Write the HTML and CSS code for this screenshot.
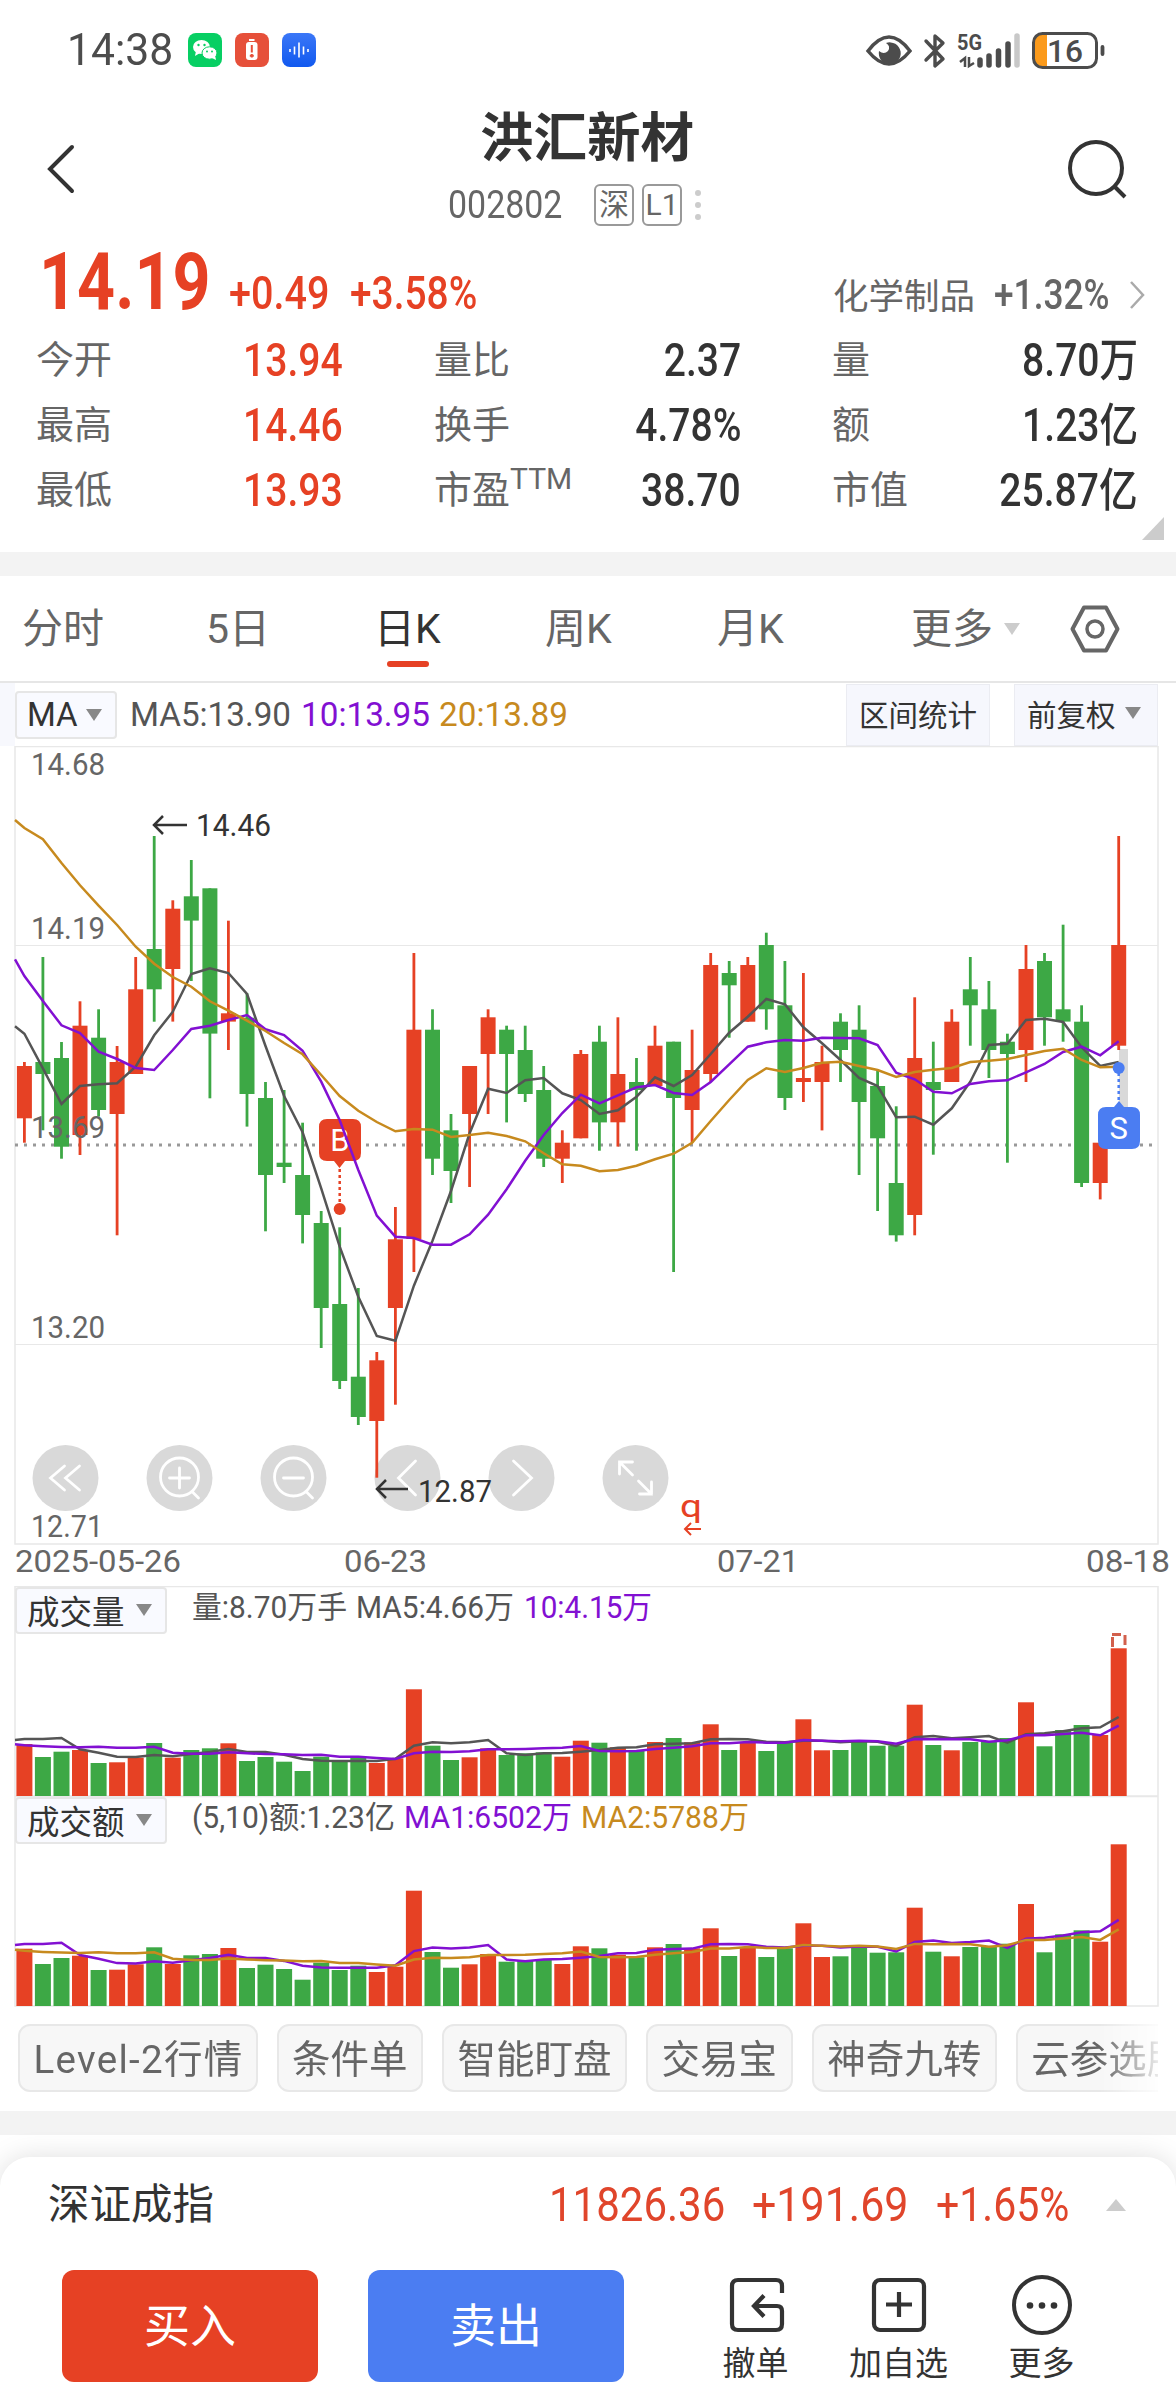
FILE: index.html
```html
<!DOCTYPE html>
<html lang="zh-CN">
<head>
  <meta charset="UTF-8" />
  <meta name="viewport" content="width=device-width, initial-scale=1.0"/>
  <title>洪汇新材 002802</title>
  <link rel="stylesheet" href="styles.css">
</head>
<body>
  <!-- Status bar -->
  <div class="status-bar">
    <span class="clock">14:38</span>
    <div class="status-apps">
      <svg class="app-icon" viewBox="0 0 34 34"><rect width="34" height="34" rx="8" fill="#07cf63"/><ellipse cx="13.500" cy="14" rx="8.500" ry="7" fill="#fff"/><path d="M8 18l-1 5 5-3z" fill="#fff"/><ellipse cx="21.500" cy="20" rx="7.500" ry="6.200" fill="#fff" stroke="#07cf63"/><path d="M24 25l4 2-1-5z" fill="#fff"/><g fill="#07cf63"><circle cx="10.500" cy="12" r="1.200"/><circle cx="16.500" cy="12" r="1.200"/><circle cx="19" cy="18.500" r="1"/><circle cx="24" cy="18.500" r="1"/></g></svg>
      <svg class="app-icon" viewBox="0 0 34 34"><rect width="34" height="34" rx="8" fill="#e6503a"/><rect x="11" y="9" width="11.500" height="18" rx="3" fill="#fff"/><rect x="14" y="6" width="5.500" height="2" fill="#fff"/><path d="M16.800 12v7.500M16.800 21v3.500M14.800 22.700h4" stroke="#e6503a" stroke-width="2"/></svg>
      <svg class="app-icon" viewBox="0 0 34 34"><defs><linearGradient id="voice" x2="0" y2="1"><stop stop-color="#3b77f7"/><stop offset="1" stop-color="#1159ef"/></linearGradient></defs><rect width="34" height="34" rx="8" fill="url(#voice)"/><path d="M8 16v3M12.500 13.500v8M17 9.500v15M21.500 13.500v8M26 16v3" stroke="#fff" stroke-width="1.600"/></svg>
    </div>
    <svg class="status-icons" viewBox="860 26 250 46">
      <path d="M868 50Q889 22 910 50Q889 76 868 50z" fill="none" stroke="#4c4c4c" stroke-width="3.500"/>
      <path d="M886 42a11 11 0 1 1-7 8q5 4 9 0 3-5-2-8z" fill="#4c4c4c"/>
      <path d="M926 40l17 18-8 7V35l8 7-17 17" fill="none" stroke="#4c4c4c" stroke-width="3.400" stroke-linecap="round" stroke-linejoin="round"/>
      <text x="957" y="49" class="net" textLength="25" lengthAdjust="spacingAndGlyphs">5G</text>
      <path d="M965 66V57l-5 4M969 56v9l5-3" fill="none" stroke="#4c4c4c" stroke-width="2.500"/>
      <path d="M980 64v-5M989 64v-9M998.500 64V50M1008 64V43" stroke="#4c4c4c" stroke-width="5.500" stroke-linecap="round"/>
      <path d="M1017 64V35" stroke="#c8c8c8" stroke-width="5.500" stroke-linecap="round"/>
      <path d="M1047 33h-6q-7 0-7 7v19q0 7 7 7h6z" fill="#fb9a1b"/>
      <rect x="1033.500" y="32.500" width="63" height="34" rx="9" fill="none" stroke="#4c4c4c" stroke-width="3"/>
      <path d="M1102.500 46v7" stroke="#4c4c4c" stroke-width="3.800" stroke-linecap="round"/>
      <text x="1047" y="61" class="batt" textLength="36" lengthAdjust="spacingAndGlyphs">16</text>
    </svg>
  </div>

  <!-- Title -->
  <header class="title-bar">
    <svg class="back" viewBox="0 0 30 50"><path d="M26 3L4 25l22 22" fill="none" stroke="#333" stroke-width="4" stroke-linecap="round"/></svg>
    <div class="title-main">
      <h1>洪汇新材</h1>
      <div class="title-sub">
        <span class="code">002802</span>
        <span class="badge">深</span>
        <span class="badge">L1</span>
        <span class="dots"><i></i><i></i><i></i></span>
      </div>
    </div>
    <svg class="search" viewBox="0 0 60 60"><circle cx="28" cy="28" r="26" fill="none" stroke="#333" stroke-width="4"/><path d="M46 46l11 11" stroke="#333" stroke-width="4"/></svg>
  </header>

  <!-- Quote -->
  <section class="quote">
    <div class="price-row">
      <span class="price">14.19</span>
      <span class="change">+0.49</span>
      <span class="change pct">+3.58%</span>
      <span class="industry">化学制品</span>
      <span class="industry-pct">+1.32%</span>
      <svg class="go" viewBox="0 0 16 28"><path d="M2 1l12 13L2 27" fill="none" stroke="#aaa" stroke-width="2.500"/></svg>
    </div>
    <div class="stats">
      <div class="stat"><span>今开</span><b class="up">13.94</b></div>
      <div class="stat"><span>量比</span><b>2.37</b></div>
      <div class="stat"><span>量</span><b>8.70<em>万</em></b></div>
      <div class="stat"><span>最高</span><b class="up">14.46</b></div>
      <div class="stat"><span>换手</span><b>4.78%</b></div>
      <div class="stat"><span>额</span><b>1.23<em>亿</em></b></div>
      <div class="stat"><span>最低</span><b class="up">13.93</b></div>
      <div class="stat"><span>市盈<sup>TTM</sup></span><b>38.70</b></div>
      <div class="stat"><span>市值</span><b>25.87<em>亿</em></b></div>
    </div>
    <i class="corner"></i>
  </section>

  <!-- Period tabs -->
  <nav class="tabs">
    <a>分时</a>
    <a>5日</a>
    <a class="active">日K</a>
    <a>周K</a>
    <a>月K</a>
    <a class="more">更多<i class="tri light"></i></a>
    <svg class="gear" viewBox="0 0 52 52"><path d="M15 4.500h22L48.500 26 37 47.500H15L3.500 26z" fill="none" stroke="#666" stroke-width="4" stroke-linejoin="round"/><circle cx="26" cy="26" r="8" fill="none" stroke="#666" stroke-width="3.500"/></svg>
  </nav>

  <!-- MA bar -->
  <div class="ma-bar">
    <div class="select">MA<i class="tri"></i></div>
    <svg class="ma-text" viewBox="125 0 450 63">
      <text x="130" y="43" textLength="161" lengthAdjust="spacingAndGlyphs" fill="#555">MA5:13.90</text>
      <text x="301" y="43" textLength="129" lengthAdjust="spacingAndGlyphs" fill="#8210d2">10:13.95</text>
      <text x="439" y="43" textLength="129" lengthAdjust="spacingAndGlyphs" fill="#c78a1e">20:13.89</text>
    </svg>
    <div class="tool">区间统计</div>
    <div class="tool">前复权<i class="tri"></i></div>
  </div>

  <!-- Charts are filled in by chart.js -->
  <svg id="kline" class="chart" width="1176" height="840" viewBox="0 746 1176 840"></svg>

  <div class="panel">
    <div class="select wide">成交量<i class="tri"></i></div>
    <svg id="volume" class="chart" width="1176" height="210" viewBox="0 1586 1176 210"></svg>
  </div>
  <div class="panel">
    <div class="select wide">成交额<i class="tri"></i></div>
    <svg id="amount" class="chart" width="1176" height="212" viewBox="0 1796 1176 212"></svg>
  </div>

  <!-- Shortcuts -->
  <div class="chips">
    <span>Level-2行情</span>
    <span>条件单</span>
    <span>智能盯盘</span>
    <span>交易宝</span>
    <span>神奇九转</span>
    <span>云参选股</span>
  </div>
  <div class="gap"></div>

  <!-- Bottom sheet -->
  <footer class="sheet">
    <div class="index-row">
      <span class="index-name">深证成指</span>
      <span class="idx v1">11826.36</span>
      <span class="idx v2">+191.69</span>
      <span class="idx v3">+1.65%</span>
      <i class="tri-up"></i>
    </div>
    <div class="actions">
      <button class="buy">买入</button>
      <button class="sell">卖出</button>
      <div class="action">
        <svg viewBox="0 0 60 60"><path d="M56 18V11q0-6-6-6H12q-6 0-6 6v38q0 6 6 6h38q6 0 6-6V36q0-5-5-5H29M38 20.500L28 31l10 10.500" fill="none" stroke="#333" stroke-width="4.200"/></svg>
        <span>撤单</span>
      </div>
      <div class="action">
        <svg viewBox="0 0 60 60"><rect x="5" y="5" width="50" height="50" rx="6" fill="none" stroke="#333" stroke-width="4.200"/><path d="M30 17v25M17 29.500h26" stroke="#333" stroke-width="4.200"/></svg>
        <span>加自选</span>
      </div>
      <div class="action">
        <svg viewBox="0 0 60 60"><circle cx="30" cy="30" r="28" fill="none" stroke="#333" stroke-width="4"/><g fill="#333"><circle cx="18" cy="30.500" r="3.300"/><circle cx="30" cy="30.500" r="3.300"/><circle cx="42" cy="30.500" r="3.300"/></g></svg>
        <span>更多</span>
      </div>
    </div>
  </footer>
  <script src="chart.js"></script>
</body>
</html>
```
FILE: styles.css
```css
body {
  margin: 0;
  width: 1176px;
  height: 2400px;
  overflow: hidden;
  background: #fff;
  color: #333;
  font-family: Roboto, 'Noto Sans CJK SC', sans-serif;
  display: flex;
  flex-direction: column;
}

svg {
  display: block;
  flex: none;
}

h1 {
  margin: 0;
}

/* Status bar */
.status-bar {
  height: 100px;
  flex: none;
  display: flex;
  align-items: center;
  box-sizing: border-box;
  padding-left: 67px;
}

.clock {
  width: 121px;
  font-size: 44px;
  line-height: 100px;
  color: #4c4c4c;
  transform: scaleX(0.97);
  transform-origin: left;
}

.status-apps {
  display: flex;
  gap: 13px;
}

.app-icon {
  width: 34px;
  height: 34px;
}

.status-icons {
  width: 250px;
  height: 46px;
  margin-left: auto;
  margin-right: 66px;
}

.status-icons text {
  fill: #4c4c4c;
}

.net {
  font-size: 22px;
  font-weight: 700;
}

.batt {
  font-size: 31px;
  font-weight: 500;
}

/* Title */
.title-bar {
  height: 140px;
  flex: none;
  display: flex;
  justify-content: space-between;
  box-sizing: border-box;
  padding: 0 48px 0 46px;
}

.back {
  width: 30px;
  height: 50px;
  margin-top: 44px;
  margin-right: 30px;
}

.search {
  width: 60px;
  height: 60px;
  margin-top: 40px;
}

.title-main {
  display: flex;
  flex-direction: column;
  align-items: center;
}

.title-main h1 {
  font-size: 53.5px;
  line-height: 78px;
  font-weight: 700;
}

.title-sub {
  display: flex;
  align-items: center;
  height: 42px;
  margin-top: 6px;
  margin-left: -25px;
  gap: 8px;
}

.code {
  width: 138px;
  font-size: 39px;
  color: #666;
  transform: scaleX(0.87);
  transform-origin: left;
}

.badge {
  width: 40px;
  height: 42px;
  box-sizing: border-box;
  border: 2px solid #999;
  border-radius: 6px;
  font-size: 30px;
  line-height: 38px;
  text-align: center;
  color: #666;
}

.dots {
  display: flex;
  flex-direction: column;
  gap: 6px;
  margin-left: 5px;
}

.dots i {
  width: 6px;
  height: 6px;
  border-radius: 50%;
  background: #ccc;
}

/* Quote */
.quote {
  height: 312px;
  flex: none;
  position: relative;
}

.price-row {
  display: flex;
  align-items: baseline;
  height: 88px;
  padding-left: 39px;
  white-space: nowrap;
  line-height: 84px;
  color: #e64124;
}

.price-row span {
  transform-origin: left;
}

.price {
  width: 190px;
  font-size: 79px;
  font-weight: 700;
  transform: scaleX(0.84);
}

.change {
  width: 121px;
  font-size: 46px;
  font-weight: 500;
  transform: scaleX(0.86);
}

.pct {
  width: 483px;
  transform: scaleX(0.845);
}

.industry {
  width: 161px;
  font-size: 35.5px;
  color: #666;
}

.industry-pct {
  width: 135px;
  font-size: 42px;
  font-weight: 500;
  color: #666;
  transform: scaleX(0.84);
}

.go {
  width: 16px;
  height: 28px;
}

.stats {
  display: grid;
  grid-template-columns: 307px 307px 306px;
  column-gap: 91px;
  grid-auto-rows: 65px;
  padding-left: 36px;
}

.stat {
  display: flex;
  justify-content: space-between;
  line-height: 65px;
  height: 65px;
  white-space: nowrap;
}

.stat span {
  font-size: 38px;
}

.stat span {
  color: #666;
}

.stat sup {
  font-size: 30px;
  line-height: 0;
  vertical-align: 14px;
}

.stat b {
  font-size: 46.5px;
  font-weight: 500;
  transform: scaleX(0.84);
  transform-origin: right;
}

.stat em {
  font-style: normal;
  font-size: 46px;
  line-height: 0;
}

.stat .up {
  color: #e64124;
}

.corner {
  position: absolute;
  right: 12px;
  bottom: 12px;
  border-left: 22px solid transparent;
  border-bottom: 23px solid #ccc;
}

/* Tabs */
.tabs {
  height: 107px;
  flex: none;
  box-sizing: border-box;
  border-bottom: 2px solid #e6e6e6;
  margin-top: 24px;
  box-shadow: 0 -24px #f3f3f3;
  display: flex;
  align-items: center;
  padding-left: 22px;
  font-size: 41px;
  line-height: 62px;
  color: #666;
  white-space: nowrap;
}

.tabs a {
  width: 172px;
}

.tabs a:first-child {
  width: 184px;
}

.tabs .active {
  position: relative;
  width: 171px;
  margin-left: -4px;
  color: #333;
}

.active::after {
  content: '';
  position: absolute;
  left: 13px;
  bottom: -7px;
  width: 42px;
  height: 6px;
  border-radius: 3px;
  background: #e64124;
}

.tabs .more {
  display: flex;
  align-items: center;
  width: 158px;
  margin-left: 22px;
}

.gear {
  width: 52px;
  height: 52px;
}

.tri {
  border: 8.5px solid transparent;
  border-top: 12px solid #888;
  border-bottom: 0;
  margin-left: 8px;
}

.tri.light {
  border-top-color: #ccc;
  margin-left: 11px;
}

/* MA bar */
.ma-bar {
  height: 63px;
  flex: none;
  display: flex;
  align-items: center;
  background: linear-gradient(#f7f8fd, #f7f8fd) 0 0 / 15px 63px no-repeat;
  padding-left: 15px;
}

.select {
  width: 102px;
  height: 48px;
  flex: none;
  box-sizing: border-box;
  border: 2px solid #e6e6e6;
  border-radius: 4px;
  background: #f9faff;
  display: flex;
  align-items: center;
  padding-left: 10px;
  font-size: 33px;
}

.ma-text {
  width: 450px;
  height: 63px;
  margin-left: 8px;
  font-size: 33px;
}

.tool {
  width: 144px;
  height: 62px;
  box-sizing: border-box;
  border: 1px solid #ebecf2;
  background: #f6f7fd;
  display: flex;
  align-items: center;
  padding: 0 0 4px 12px;
  font-size: 29.5px;
  white-space: nowrap;
  margin-left: auto;
}

.tool .tri {
  margin-left: 9px;
}

.tool:last-child {
  margin: 0 18px 0 24px;
}

/* Charts */
.chart text {
  font-size: 31px;
}

.panel {
  flex: none;
  position: relative;
}

.select.wide {
  position: absolute;
  left: 15px;
  top: 1px;
  width: 152px;
  height: 47px;
  padding-bottom: 3px;
  font-size: 32.5px;
}

.wide .tri {
  margin: 2px 0 0 11px;
}

/* Shortcuts */
.chips {
  display: flex;
  gap: 19px;
  height: 68px;
  flex: none;
  margin: 16px 18px 19px 0;
  padding-left: 18px;
  overflow: hidden;
  -webkit-mask-image: linear-gradient(90deg, #000 1100px, transparent 1168px);
  mask-image: linear-gradient(90deg, #000 1100px, transparent 1168px);
}

.chips span {
  flex: none;
  height: 68px;
  box-sizing: border-box;
  border: 2px solid #e8e8e8;
  border-radius: 12px;
  background: #f7f7f7;
  padding: 0 13.5px;
  font-size: 38.5px;
  line-height: 67px;
  color: #666;
}

.chips span:first-child {
  letter-spacing: 1.3px;
  padding-right: 12px;
}

.gap {
  height: 24px;
  flex: none;
  background: #f3f3f3;
}

/* Bottom sheet */
.sheet {
  flex: none;
  height: 243px;
  margin-top: 22px;
  border-radius: 30px 30px 0 0;
  background: #fff;
  box-shadow: 0 0 28px rgba(0, 0, 0, 0.13);
}

.index-row {
  height: 113px;
  display: flex;
  align-items: center;
  line-height: 96px;
  box-sizing: border-box;
  padding-bottom: 17px;
  padding-left: 48px;
  white-space: nowrap;
}

.index-name {
  width: 501px;
  font-size: 41.5px;
}

.idx {
  font-size: 48px;
  color: #e0452b;
  transform: scaleX(0.875);
  transform-origin: left;
}

.v1 {
  width: 203px;
}

.v2 {
  width: 184px;
  transform: scaleX(0.895);
}

.v3 {
  width: 170px;
  transform: scaleX(0.855);
}

.tri-up {
  border: 10px solid transparent;
  border-bottom: 12px solid #ccc;
  border-top: 0;
}

.actions {
  display: flex;
  padding-left: 62px;
}

.actions button {
  width: 256px;
  height: 112px;
  margin-right: 50px;
  border: 0;
  border-radius: 12px;
  padding: 0 0 8px;
  font-family: inherit;
  font-size: 46px;
  color: #fff;
}

.buy {
  background: #e64124;
}

.sell {
  background: #4b7df2;
}

.action {
  width: 143px;
  margin-top: 5px;
  display: flex;
  flex-direction: column;
  align-items: center;
  font-size: 33px;
  line-height: 50px;
}

.sell + .action {
  margin-left: 10px;
}

.action svg {
  width: 60px;
  height: 60px;
  margin-bottom: 4px;
}
```
FILE: chart.js
```js
const RED = '#e64124';
const GREEN = '#3da845';
const DARK = '#555';
const PURPLE = '#8210d2';
const GOLD = '#c78a1e';
const GRID = '#e8e8e8';

// direction, high, low, body top, body bottom
const candles = [
  ['r', 966, 1208, 978, 1135], ['g', 651, 1171, 966, 1002], ['g', 906, 1256, 954, 1220],
  ['r', 784, 1245, 857, 1185], ['g', 808, 1130, 893, 1110], ['r', 918, 1486, 966, 1122],
  ['r', 651, 1002, 748, 1002], ['g', 288, 845, 627, 748], ['r', 481, 845, 506, 687],
  ['g', 360, 723, 469, 542], ['g', 445, 1075, 445, 881], ['r', 542, 930, 820, 845],
  ['g', 760, 1160, 833, 1062], ['g', 1026, 1474, 1074, 1305], ['g', 1050, 1329, 1268, 1281],
  ['g', 1148, 1510, 1305, 1425], ['g', 1413, 1824, 1449, 1704], ['g', 1462, 1947, 1692, 1923],
  ['g', 1644, 2055, 1910, 2031], ['r', 1836, 2213, 1861, 2043], ['r', 1401, 1994, 1498, 1704],
  ['r', 639, 1596, 869, 1497], ['g', 808, 1305, 869, 1256], ['g', 1122, 1389, 1171, 1293],
  ['r', 978, 1341, 978, 1122], ['r', 808, 1122, 832, 942], ['g', 857, 1147, 869, 942],
  ['g', 857, 1086, 930, 1062], ['g', 978, 1281, 1050, 1256], ['r', 1171, 1329, 1208, 1256],
  ['r', 930, 1195, 942, 1195], ['g', 857, 1232, 905, 1147], ['r', 832, 1220, 1002, 1147],
  ['g', 954, 1232, 1026, 1050], ['r', 857, 1038, 917, 1038], ['g', 905, 1596, 905, 1074],
  ['r', 869, 1208, 990, 1110], ['r', 639, 1026, 675, 1002], ['g', 663, 893, 699, 736],
  ['r', 651, 845, 675, 845], ['g', 578, 869, 615, 808], ['g', 663, 1110, 796, 1074],
  ['r', 699, 1086, 1014, 1026], ['r', 917, 1171, 966, 1026], ['g', 820, 1026, 845, 930],
  ['g', 796, 1305, 869, 1086], ['g', 990, 1413, 1038, 1195], ['g', 1099, 1505, 1329, 1486],
  ['r', 772, 1486, 954, 1425], ['g', 905, 1244, 1026, 1050], ['r', 808, 1026, 845, 1026],
  ['g', 651, 917, 748, 796], ['g', 723, 1014, 808, 930], ['g', 881, 1268, 905, 942],
  ['r', 615, 1026, 687, 930], ['g', 639, 917, 663, 832], ['g', 554, 905, 808, 845],
  ['g', 796, 1341, 845, 1329], ['r', 1208, 1378, 1208, 1329], ['r', 288, 930, 615, 917]
];

// the first value of every line sits on the left frame
const ma5 = [859, 881, 985, 1092, 1038, 1033, 1030, 980, 886, 815, 702, 685, 699, 762, 918, 1068, 1177, 1345, 1520, 1670, 1788, 1802, 1637, 1502, 1353, 1180, 1046, 1059, 1021, 1014, 1060, 1080, 1122, 1111, 1070, 1012, 1038, 1005, 942, 878, 830, 777, 793, 862, 910, 960, 1014, 1038, 1132, 1130, 1154, 1105, 1025, 915, 911, 840, 836, 846, 922, 978, 966];
const ma10 = [658, 708, 783, 856, 879, 935, 957, 984, 990, 930, 867, 857, 840, 825, 868, 885, 932, 1025, 1141, 1290, 1427, 1490, 1494, 1514, 1514, 1483, 1424, 1348, 1262, 1185, 1119, 1064, 1090, 1066, 1042, 1035, 1059, 1065, 1026, 973, 920, 907, 900, 902, 893, 894, 895, 915, 998, 1018, 1055, 1060, 1032, 1024, 1021, 997, 972, 936, 920, 946, 904];
const ma20 = [240, 264, 298, 369, 436, 497, 555, 620, 671, 711, 740, 784, 812, 842, 873, 909, 943, 1005, 1068, 1112, 1146, 1174, 1167, 1169, 1191, 1185, 1178, 1188, 1204, 1240, 1273, 1277, 1294, 1290, 1277, 1258, 1241, 1208, 1143, 1080, 1020, 985, 996, 984, 968, 965, 978, 990, 1011, 996, 989, 984, 966, 962, 957, 945, 933, 926, 960, 982, 980];

const volume = [492, 531, 515, 510, 549, 547, 533, 489, 533, 510, 505, 490, 543, 531, 545, 573, 530, 540, 532, 549, 535, 328, 497, 540, 532, 505, 525, 520, 517, 530, 482, 488, 502, 512, 486, 474, 487, 433, 510, 486, 513, 488, 418, 511, 510, 484, 497, 497, 374, 495, 511, 486, 486, 474, 367, 499, 450, 435, 465, 205];
const amount = [1106, 1152, 1134, 1127, 1170, 1169, 1153, 1102, 1152, 1126, 1122, 1104, 1164, 1154, 1167, 1199, 1148, 1170, 1157, 1176, 1160, 932, 1116, 1163, 1153, 1122, 1145, 1142, 1139, 1152, 1099, 1105, 1124, 1132, 1102, 1092, 1105, 1045, 1128, 1104, 1131, 1105, 1030, 1131, 1129, 1103, 1118, 1117, 983, 1115, 1129, 1101, 1101, 1091, 972, 1117, 1063, 1051, 1085, 793];
const vol5 = [480, 477, 477, 474, 508, 518, 530, 531, 525, 529, 522, 516, 507, 516, 516, 524, 537, 542, 543, 543, 543, 536, 497, 487, 490, 487, 480, 520, 525, 520, 519, 515, 510, 503, 502, 493, 491, 490, 478, 477, 478, 485, 487, 482, 482, 487, 484, 485, 498, 472, 468, 475, 472, 468, 488, 463, 460, 454, 445, 442, 411];
const vol10 = [493, 496, 499, 501, 502, 500, 503, 503, 500, 518, 521, 521, 517, 520, 522, 523, 525, 524, 530, 530, 534, 537, 520, 515, 516, 514, 508, 508, 507, 505, 503, 498, 513, 514, 513, 507, 503, 499, 490, 490, 486, 488, 488, 480, 482, 484, 482, 484, 491, 477, 478, 477, 478, 485, 481, 466, 466, 462, 458, 466, 437];
// turnover averages follow the volume ones, slightly taller
const toAmount = v => 1278 - (648 - v) * 1.09;

const cx = i => 24.4 + i * 18.548;
const color = d => (d === 'r' ? RED : GREEN);

function rect(x, y, w, h, fill) {
  return `<rect x="${x.toFixed(1)}" y="${y.toFixed(1)}" width="${w}" height="${h.toFixed(1)}" fill="${fill}"/>`;
}

function line(x1, y1, x2, y2, stroke, extra = '') {
  return `<path d="M${x1} ${y1}L${x2} ${y2}" stroke="${stroke}" ${extra}/>`;
}

function poly(values, top, stroke) {
  const pts = values.map((v, i) => `${(i ? cx(i - 1) : 15).toFixed(1)},${(top + v / 3).toFixed(1)}`);
  return `<polyline points="${pts.join(' ')}" fill="none" stroke="${stroke}" stroke-width="2.5"/>`;
}

function text(x, y, w, str, fill = '#666', extra = '') {
  return `<text x="${x}" y="${y}" textLength="${w}" lengthAdjust="spacingAndGlyphs" fill="${fill}" ${extra}>${str}</text>`;
}

function roundButton(x, icon) {
  return `<g transform="translate(${x} 1478)"><circle r="33" fill="#d9d9d9"/><path d="${icon}" fill="none" stroke="#fff" stroke-width="2.8" stroke-linecap="round"/></g>`;
}

function drawKline() {
  let s = '';
  s += `<path d="M15 746.500H1158V1544H15Z" fill="none" stroke="${GRID}" stroke-width="1.500"/>`;
  s += line(15, 945.5, 1158, 945.5, GRID) + line(15, 1344.5, 1158, 1344.5, GRID);
  s += line(15, 1145, 1154, 1145, '#999', 'stroke-width="2.800" stroke-dasharray="3 6"');

  const glass = 'M19 -1A19 19 0 1 1 -19 -1A19 19 0 1 1 19 -1M13 14l6 6';
  s += roundButton(65.5, 'M-1 -12L-15 0L-1 12M14 -12L0 0L14 12');
  s += roundButton(179.5, glass + 'M-10 0H10M0 -10V10');
  s += roundButton(293.5, glass + 'M-10 0H10');
  s += roundButton(407.5, 'M8 -17L-9 0L8 17');
  s += roundButton(521.5, 'M-8 -17L10 0L-8 17');
  s += roundButton(635.5, 'M-3 -3L-16 -16M-16 -4V-16H-3M3 3L16 16M4 16H16V4');

  // last day shadow
  s += rect(1119, 1049, 9, 60, '#d9d9d9');
  candles.forEach(([d, high, low, top, bottom], i) => {
    s += rect(cx(i) - 1.4, 740 + high / 3, 2.8, (low - high) / 3, color(d));
    s += rect(cx(i) - 7.5, 740 + top / 3, 15, (bottom - top) / 3, color(d));
  });

  // buy mark
  s += '<path d="M327 1119h26q8 0 8 8v26q0 8-8 8h-8l-5.500 7-5.500-7h-7q-8 0-8-8v-26q0-8 8-8z" fill="#e64124"/>';
  s += line(339.7, 1169, 339.7, 1203, RED, 'stroke-width="2.500" stroke-dasharray="3 3"');
  s += `<circle cx="339.700" cy="1209" r="6" fill="${RED}"/>`;
  s += '<text x="340" y="1151" text-anchor="middle" fill="#fff">B</text>';

  s += poly(ma5, 740, DARK) + poly(ma10, 740, PURPLE) + poly(ma20, 740, GOLD);

  // sell mark
  s += '<circle cx="1118.700" cy="1068" r="6" fill="#4b7df2"/>';
  s += line(1118.7, 1073, 1118.7, 1102, '#4b7df2', 'stroke-width="2.500" stroke-dasharray="3 3"');
  s += '<path d="M1106 1107h8l5-6 5 6h8q8 0 8 8v26q0 8-8 8h-26q-8 0-8-8v-26q0-8 8-8z" fill="#4b7df2"/>';
  s += '<text x="1118.700" y="1139" text-anchor="middle" fill="#fff">S</text>';

  s += text(31, 775, 74, '14.68') + text(31, 939, 74, '14.19') + text(31, 1138, 74, '13.69');
  s += text(31, 1338, 74, '13.20') + text(31, 1537, 72, '12.71');
  s += text(196, 836, 75, '14.46', '#333') + text(418, 1502, 74, '12.87', '#333');
  s += '<path d="M187 825H155M163 816l-9 9 9 9M408 1489H378M386 1480l-9 9 9 9" fill="none" stroke="#333" stroke-width="2.500"/>';
  s += text(680, 1517, 22, 'q', RED);
  s += `<path d="M701 1529H685M691 1523l-6 6 6 6" fill="none" stroke="${RED}" stroke-width="2"/>`;

  s += text(15, 1572, 166, '2025-05-26') + text(344, 1572, 83, '06-23');
  s += text(717, 1572, 82, '07-21') + text(1086, 1572, 84, '08-18');
  document.getElementById('kline').innerHTML = s;
}

function drawBars(id, data, base, lines, labels) {
  const bottom = 1580 + base / 3;
  let s = `<path d="M15 ${bottom - 209.5}H1158V${bottom}H15Z" fill="none" stroke="${GRID}" stroke-width="1.500"/>`;
  data.forEach((v, i) => {
    s += rect(cx(i) - 8, 1580 + v / 3, 16, (base - v) / 3, color(candles[i][0]));
  });
  s += lines + labels;
  document.getElementById(id).innerHTML = s;
}

drawKline();
drawBars('volume', volume, 648,
  poly(vol5, 1580, DARK) + poly(vol10, 1580, PURPLE) +
  '<path d="M1112.500 1647v-10M1112 1634.500h9M1125 1635v10" fill="none" stroke="#d2604c" stroke-width="3"/>',
  text(192, 1618, 155, '量:8.70万手', DARK) + text(356, 1618, 158, 'MA5:4.66万', DARK) + text(524, 1618, 128, '10:4.15万', PURPLE));
drawBars('amount', amount, 1278,
  poly(vol5.map(toAmount), 1580, PURPLE) + poly(vol10.map(toAmount), 1580, GOLD),
  text(192, 1828, 203, '(5,10)额:1.23亿', DARK) + text(404, 1828, 168, 'MA1:6502万', PURPLE) + text(581, 1828, 168, 'MA2:5788万', GOLD));
```
